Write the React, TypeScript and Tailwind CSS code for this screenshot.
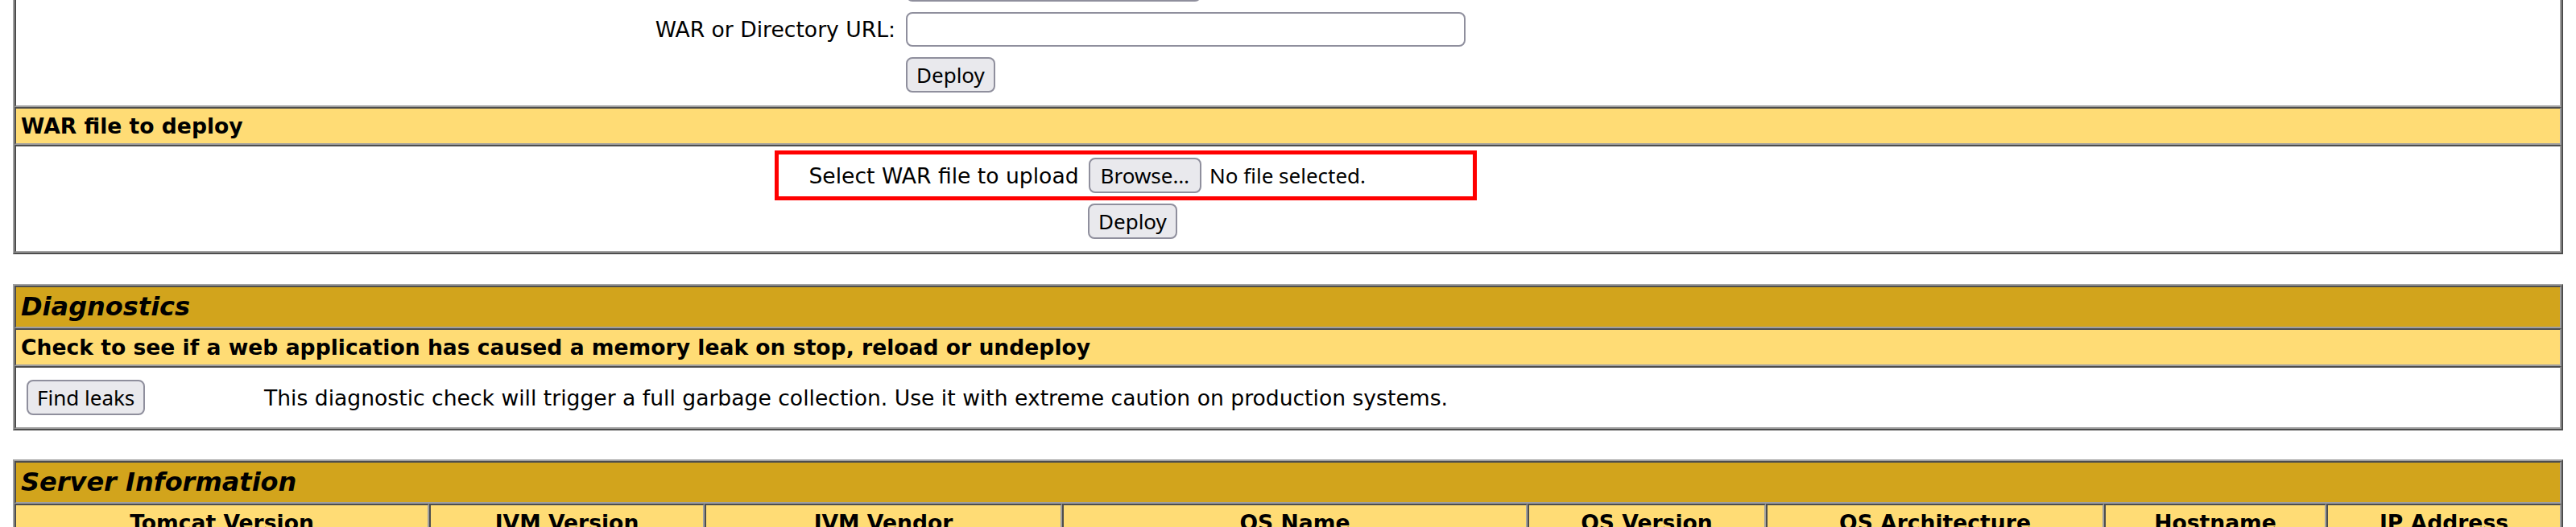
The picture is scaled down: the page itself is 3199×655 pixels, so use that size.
const tableBorder =
  'border-2 border-t-[#a0a0a0] border-l-[#a0a0a0] border-r-[#4d4d4d] border-b-[#4d4d4d]'
const cellBorder =
  'border-2 border-t-[#4d4d4d] border-l-[#4d4d4d] border-r-[#a0a0a0] border-b-[#a0a0a0]'

const btn =
  "h-[44px] px-[11px] border-2 border-[#8f8f9d] rounded-[8px] bg-[#e9e9ed] font-['Noto_Sans',sans-serif] text-[26px] leading-none text-black flex items-center"

const textInput = 'h-[43px] border-2 border-[#8f8f9d] rounded-[8px] bg-white'

const serverCols = [
  'Tomcat Version',
  'JVM Version',
  'JVM Vendor',
  'OS Name',
  'OS Version',
  'OS Architecture',
  'Hostname',
  'IP Address',
]

function Title({ text }: { text: string }) {
  return (
    <div className={`${cellBorder} bg-[#d2a41c] px-[6px] py-[6px] text-[32px] leading-[37px] font-bold italic`}>
      {text}
    </div>
  )
}

function Header({ text }: { text: string }) {
  return (
    <div className={`${cellBorder} bg-[#ffdc75] px-[6px] py-[6px] leading-[31px] font-bold`}>
      {text}
    </div>
  )
}

export default function App() {
  return (
    <div className="w-full h-[655px] overflow-hidden bg-white px-[16px] font-['DejaVu_Sans',sans-serif] text-[26.6px] text-black">
      {/* Deploy table, scrolled: only its lower part is in view */}
      <div className={`${tableBorder} -mt-[45px]`}>
        <div className={`${cellBorder} pb-[16px]`}>
          <div className="grid grid-cols-[1092px_auto] gap-x-[13px] gap-y-[13px] items-center">
            <span className="text-right leading-[31px]">XML Configuration file URL:</span>
            <input type="text" className={`${textInput} w-[367px]`} />
            <span className="text-right leading-[31px]">WAR or Directory URL:</span>
            <input type="text" className={`${textInput} w-[695px]`} />
            <span />
            <button className={`${btn} w-fit`}>Deploy</button>
          </div>
        </div>

        <Header text="WAR file to deploy" />

        <div className={`${cellBorder} pt-[5px] pb-[15px]`}>
          <div className="ml-[942px] w-[872px] flex flex-col">
            <div className="border-[5px] border-[#ff0000] px-[5px] py-[4px] flex items-center gap-x-[12px]">
              <span className="w-[368px] text-right leading-[31px]">Select WAR file to upload</span>
              <div className="w-[473px] flex items-center gap-x-[10px]">
                <button className={`${btn} px-[13px]`}>Browse…</button>
                <span className="font-['Noto_Sans',sans-serif] text-[26px]">No file selected.</span>
              </div>
            </div>
            <button className={`${btn} w-fit ml-[389px] mt-[4px]`}>Deploy</button>
          </div>
        </div>
      </div>

      {/* Diagnostics */}
      <div className={`${tableBorder} mt-[37px]`}>
        <Title text="Diagnostics" />
        <Header text="Check to see if a web application has caused a memory leak on stop, reload or undeploy" />
        <div className={`${cellBorder} pl-[13px] py-[15px] grid grid-cols-[295px_auto] items-center`}>
          <button className={`${btn} w-fit`}>Find leaks</button>
          <span className="leading-[31px]">
            This diagnostic check will trigger a full garbage collection. Use it with extreme caution on production systems.
          </span>
        </div>
      </div>

      {/* Server Information */}
      <div className={`${tableBorder} mt-[36px]`}>
        <Title text="Server Information" />
        <div className="grid grid-cols-[515px_342px_444px_578px_296px_420px_276px_292px]">
          {serverCols.map((c) => (
            <div key={c} className={`${cellBorder} bg-[#ffdc75] px-[6px] py-[6px] leading-[31px] font-bold text-center`}>
              {c}
            </div>
          ))}
        </div>
      </div>
    </div>
  )
}
